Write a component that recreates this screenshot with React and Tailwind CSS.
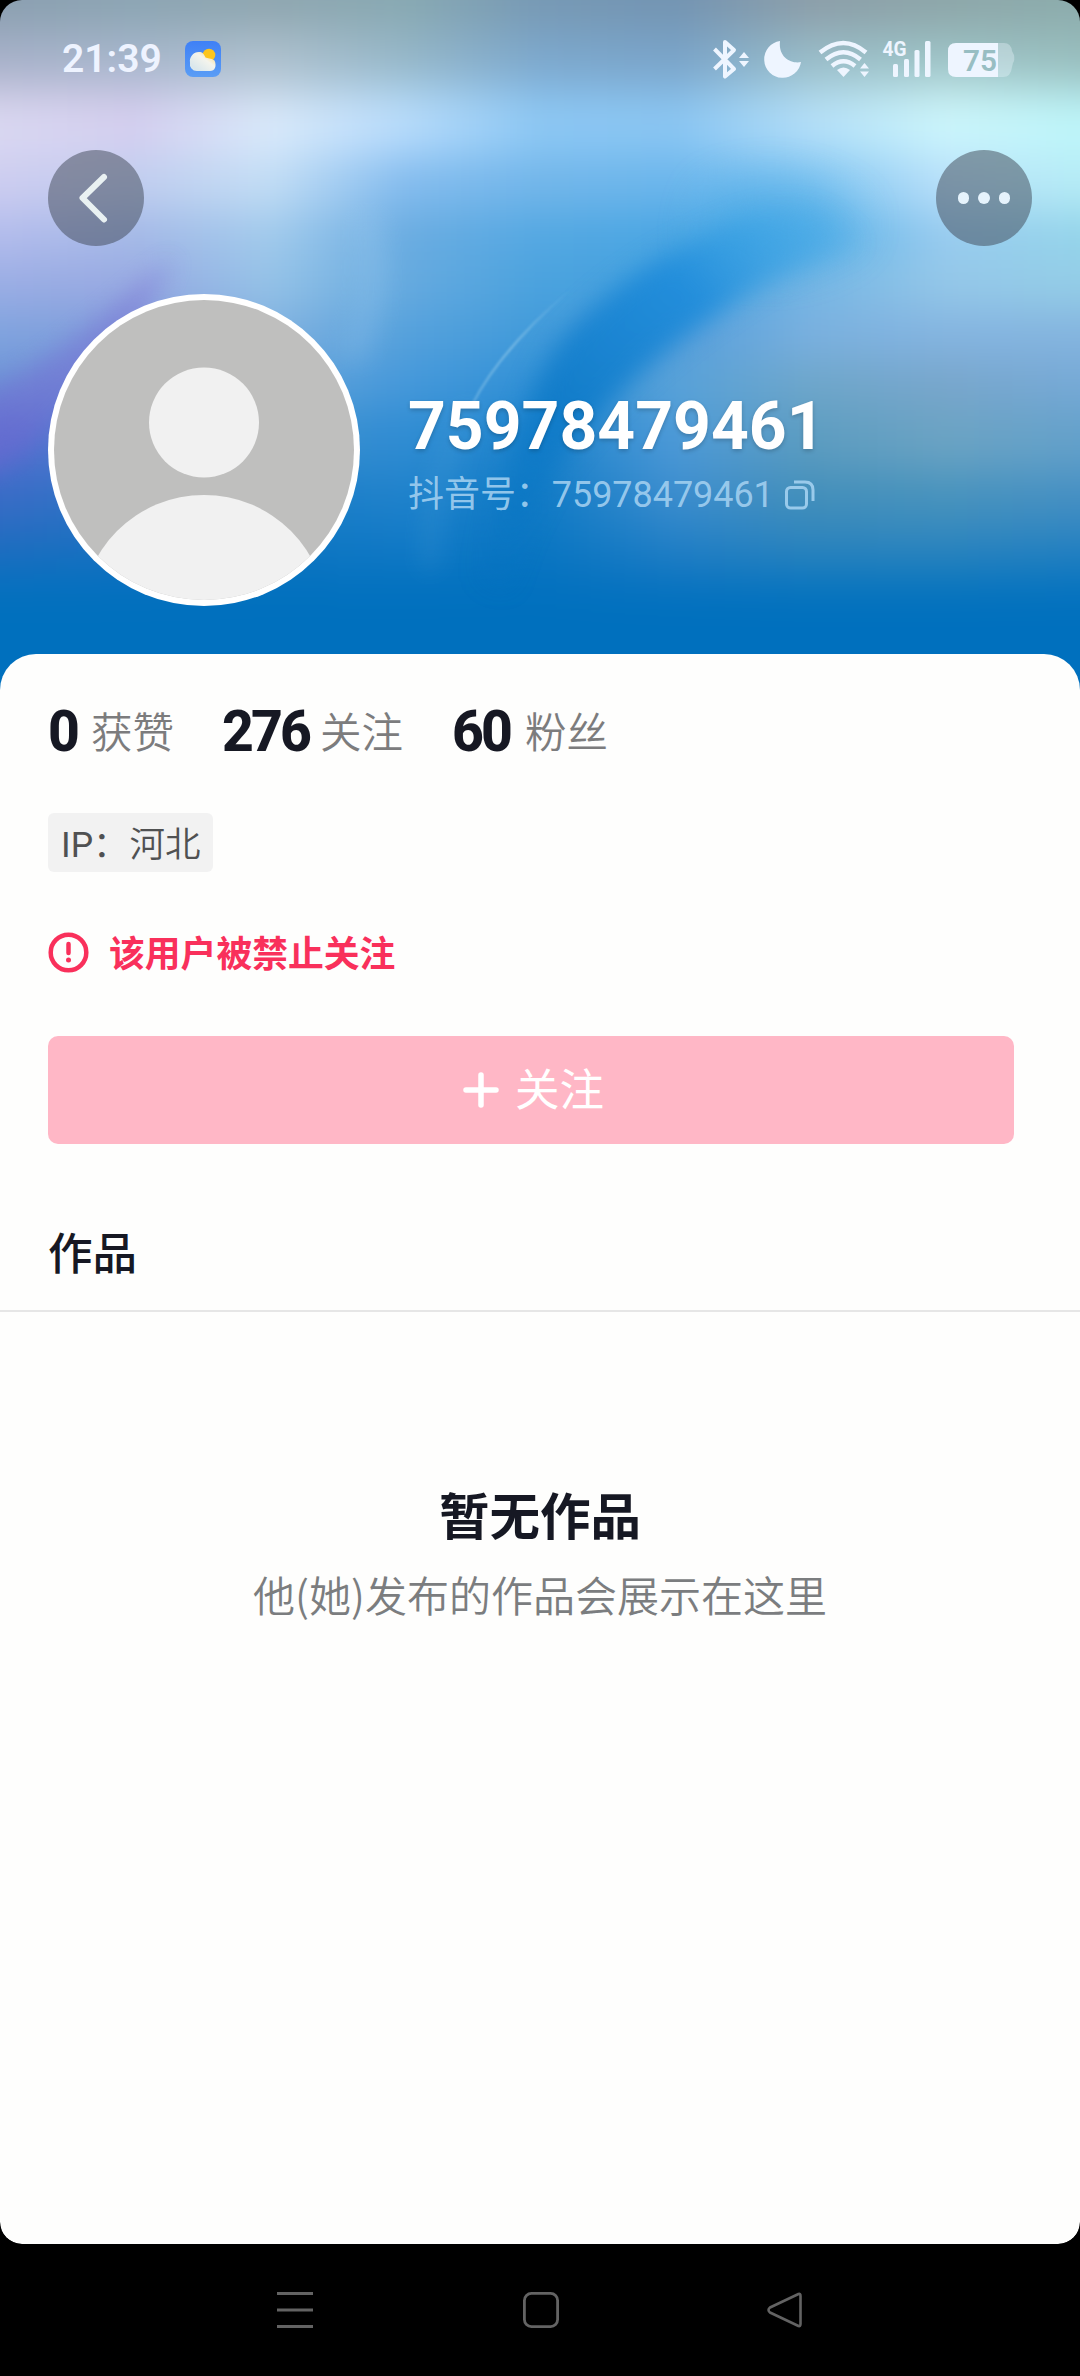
import React from "react";

const backdropRows = [
  { y: -60, h: 90, colors: ["#8b9fb0", "#8ca5b3", "#8fa6b0", "#88a9b2", "#7799b4", "#7394b2", "#8c9ea9", "#8da6a9", "#8cacac"] },
  { y: 30, h: 50, colors: ["#a5b0c8", "#a5b6cb", "#adc0cd", "#95b6c7", "#7ca7cb", "#79a3c8", "#98bbc7", "#9cc2c5", "#98bdbd"] },
  { y: 80, h: 20, colors: ["#c6c4de", "#c3c1de", "#c3d3e3", "#a9cfe8", "#86bae4", "#84b7e0", "#acd4e2", "#bfe4e6", "#abdcde"] },
  { y: 100, h: 55, colors: ["#dad8f1", "#d5cff0", "#daeafb", "#b8dcfc", "#8dc8f4", "#8ac6f3", "#b4dff9", "#ccf6fc", "#bef6fa"] },
  { y: 155, h: 55, colors: ["#cdcdf0", "#c1ceef", "#c2ddf5", "#84bcee", "#72b6ea", "#6bb6ec", "#80c4f0", "#b9e0fa", "#b6ecf6"] },
  { y: 210, h: 50, colors: ["#b3bcec", "#a4b9e7", "#a1caec", "#6aace1", "#54a8e2", "#4aa6e3", "#5ab2e8", "#98cbef", "#94d4ea"] },
  { y: 260, h: 50, colors: ["#9aade4", "#98a9e2", "#94c2e7", "#66aadf", "#4aa2de", "#42a0de", "#76b6e4", "#94c7e8", "#94cde7"] },
  { y: 310, h: 50, colors: ["#7fa3de", "#7f9cda", "#80b0df", "#55a1dc", "#409ada", "#559edb", "#7ab0df", "#84b4e0", "#84b4df"] },
  { y: 360, h: 50, colors: ["#6d92d6", "#6b90d6", "#64a3da", "#4598da", "#3090d6", "#58a2d9", "#6ea6ca", "#78a6cb", "#76a9d6"] },
  { y: 410, h: 60, colors: ["#556ecf", "#4b7fcf", "#3b8ed0", "#2f8cd2", "#1d83cc", "#4c99d7", "#5c9cc0", "#6ba3c3", "#64a1ca"] },
  { y: 470, h: 50, colors: ["#3a6cc6", "#2c76c6", "#1d7dc7", "#1f82cb", "#117bc6", "#3c8dce", "#438fba", "#4893bd", "#4690c3"] },
  { y: 520, h: 40, colors: ["#226cc0", "#1a72c1", "#1077c3", "#127ac7", "#0b77c3", "#2581c7", "#2f85bd", "#3086be", "#2a83c1"] },
  { y: 560, h: 30, colors: ["#0c70bf", "#0a70bf", "#0672bf", "#0773c0", "#0572c0", "#1176c1", "#147abf", "#147abe", "#1078c0"] },
  { y: 590, h: 210, colors: ["#0070be", "#0070be", "#0070be", "#0070be", "#0070be", "#0070be", "#0070be", "#0070be", "#0070be"] },
];

function Backdrop() {
  return (
    <svg className="absolute inset-0 h-[720px] w-[1080px]" viewBox="0 0 1080 720" preserveAspectRatio="none">
      <defs>
        <filter id="smooth" filterUnits="userSpaceOnUse" x="-100" y="-100" width="1280" height="920" colorInterpolationFilters="sRGB">
          <feGaussianBlur stdDeviation="14 20" />
        </filter>
        <filter id="soft" filterUnits="userSpaceOnUse" x="-100" y="-100" width="1280" height="920" colorInterpolationFilters="sRGB">
          <feGaussianBlur stdDeviation="22" />
        </filter>
        <filter id="edge" filterUnits="userSpaceOnUse" x="-100" y="-100" width="1280" height="920" colorInterpolationFilters="sRGB">
          <feGaussianBlur stdDeviation="12" />
        </filter>
        <filter id="thin" filterUnits="userSpaceOnUse" x="0" y="0" width="1080" height="720">
          <feGaussianBlur stdDeviation="1.2" />
        </filter>
        <linearGradient id="band" x1="840" y1="200" x2="490" y2="590" gradientUnits="userSpaceOnUse">
          <stop offset="0" stopColor="#44aae8" stopOpacity="0" />
          <stop offset="0.16" stopColor="#2f9ce2" stopOpacity="0.5" />
          <stop offset="0.32" stopColor="#1f8cdb" stopOpacity="0.9" />
          <stop offset="0.65" stopColor="#0e7ac8" stopOpacity="0.9" />
          <stop offset="1" stopColor="#0070be" stopOpacity="0.1" />
        </linearGradient>
        <linearGradient id="arc" x1="570" y1="290" x2="465" y2="415" gradientUnits="userSpaceOnUse">
          <stop offset="0" stopColor="#8fc8ea" stopOpacity="0" />
          <stop offset="0.5" stopColor="#8fc8ea" stopOpacity="0.6" />
          <stop offset="1" stopColor="#8fc8ea" stopOpacity="0.4" />
        </linearGradient>
        {backdropRows.map((row, i) => (
          <linearGradient key={i} id={`row${i}`} x1="0" y1="0" x2="1080" y2="0" gradientUnits="userSpaceOnUse">
            {row.colors.map((color, j) => (
              <stop key={j} offset={j / 8} stopColor={color} />
            ))}
          </linearGradient>
        ))}
      </defs>
      <g filter="url(#smooth)">
        {backdropRows.map((row, i) => (
          <rect key={i} x="-80" y={row.y} width="1240" height={row.h + 1} fill={`url(#row${i})`} />
        ))}
      </g>
      <path d="M710 195 Q790 165 850 210 Q880 235 800 262 Q740 270 700 250Z" fill="#45a8e6" opacity="0.5" filter="url(#soft)" />
      <path d="M860 245 Q820 190 740 220 Q620 270 560 340 Q510 420 480 580 L508 590 Q530 490 590 425 Q650 355 740 298 Q800 262 860 245Z" fill="url(#band)" filter="url(#edge)" />
      <path d="M-20 395 Q60 360 175 255 Q115 370 60 420 Q20 460 -20 480Z" fill="#7668d2" opacity="0.45" filter="url(#edge)" />
      <path d="M366 215 Q385 290 350 360" stroke="#a9d2f4" strokeWidth="26" opacity="0.18" fill="none" filter="url(#edge)" />
      <path d="M472 405 Q500 350 570 290" stroke="url(#arc)" strokeWidth="2.500" fill="none" filter="url(#thin)" />
      <path d="M430 570 Q430 470 472 405" stroke="#6db4e4" strokeWidth="16" opacity="0.18" fill="none" filter="url(#edge)" />
    </svg>
  );
}

function WeatherIcon() {
  return (
    <svg className="ml-[24px] h-9 w-9" viewBox="0 0 36 36">
      <defs>
        <linearGradient id="sky" x1="0" y1="0" x2="0" y2="1">
          <stop offset="0" stopColor="#3f80f6" />
          <stop offset="1" stopColor="#5a9df5" />
        </linearGradient>
        <linearGradient id="cloud" x1="0" y1="1" x2="1" y2="0">
          <stop offset="0.2" stopColor="#dbe8ec" />
          <stop offset="0.6" stopColor="#f4f4ec" />
          <stop offset="1" stopColor="#ffd76a" />
        </linearGradient>
      </defs>
      <rect width="36" height="36" rx="8" fill="url(#sky)" />
      <circle cx="24" cy="14" r="6.3" fill="#fcc51c" />
      <path d="M12 30a7 7 0 0 1-7-8.500A9 9 0 0 1 14 11c3.500 0 5 2 6.500 5.500 2 1 5.500.500 9 3C32 25 30 30 25 30Z" fill="url(#cloud)" />
    </svg>
  );
}

function StatusIcons() {
  return (
    <svg className="h-[52px] w-[304px]" viewBox="712 30 304 52" fill="#eef5ff">
      <path d="M714.500 49 L734 69 L725 76.500 V42 L734 50 L714.500 69" fill="none" stroke="#eef5ff" strokeWidth="4" strokeLinejoin="round" />
      <path d="M739 58 l5-6 5 6Z M739 61 l5 6 5-6Z" />
      <path d="M780 41 A18.500 18.500 0 1 0 801 62 C793 64 778 59 780 41Z" />
      <g fill="none" stroke="#eef5ff" strokeWidth="4.400">
        <path d="M820 52.500 Q843.500 33.500 866 52.500" />
        <path d="M826 59.500 Q843.500 45 860.500 59.500" />
        <path d="M832 66 Q843.500 56.500 855 66" />
      </g>
      <path d="M837 70 Q843.500 65 850 70 L843.500 77Z" />
      <path d="M860 68.500 l4.500-5.500 4.500 5.500Z M860 71.500 l4.500 5.500 4.500-5.500Z" />
      <text x="882.500" y="55.500" fontFamily="Roboto" fontSize="20.500" fontWeight="700" textLength="24" lengthAdjust="spacingAndGlyphs">4G</text>
      <rect x="893" y="64" width="5" height="13" rx="1.500" />
      <rect x="904" y="59" width="5" height="18" rx="1.500" />
      <rect x="914.500" y="50" width="5" height="27" rx="1.500" />
      <rect x="925" y="41" width="5.500" height="36" rx="1.500" />
      <path d="M998 43h6q7 0 8 8l2 4q1 5-1 8l-1 4q-1 10-9 10h-5Z" opacity="0.350" />
      <path d="M956 43h42v34h-42q-8 0-8-8V51q0-8 8-8Z" />
      <text x="963" y="71" fontFamily="Roboto" fontSize="29.500" fontWeight="600" fill="#98bec3" textLength="34" lengthAdjust="spacingAndGlyphs">75</text>
    </svg>
  );
}

function StatusBar() {
  return (
    <div className="flex h-[116px] items-start justify-between pt-[30px] pr-16 pl-[62px]">
      <div className="flex items-center pt-[10px]">
        <span className="w-[99px] text-[39px] leading-[38px] font-semibold text-[#eef3ff]">21:39</span>
        <WeatherIcon />
      </div>
      <StatusIcons />
    </div>
  );
}

function TopButtons() {
  return (
    <div className="mt-[34px] flex justify-between px-12">
      <button className="flex h-24 w-24 items-center justify-center rounded-full bg-[#3d4654]/50">
        <svg className="h-24 w-24" viewBox="0 0 96 96" fill="none" stroke="#e9f1f2" strokeWidth="6" strokeLinecap="round" strokeLinejoin="round">
          <path d="M56 27 L34.500 48 L56 69.500" />
        </svg>
      </button>
      <button className="flex h-24 w-24 items-center justify-center gap-[9px] rounded-full bg-[#3d4654]/50">
        <span className="h-[11.500px] w-[11.500px] rounded-full bg-[#e6f3fc]" />
        <span className="h-[11.500px] w-[11.500px] rounded-full bg-[#e6f3fc]" />
        <span className="h-[11.500px] w-[11.500px] rounded-full bg-[#e6f3fc]" />
      </button>
    </div>
  );
}

function Avatar() {
  return (
    <svg className="h-[312px] w-[312px]" viewBox="0 0 312 312">
      <clipPath id="face">
        <circle cx="156" cy="156" r="150" />
      </clipPath>
      <circle cx="156" cy="156" r="156" fill="#fff" />
      <g clipPath="url(#face)">
        <rect width="312" height="312" fill="#bfbfbe" />
        <circle cx="156" cy="128.500" r="55" fill="#f1f1f1" />
        <circle cx="156" cy="324" r="123" fill="#f1f1f1" />
      </g>
    </svg>
  );
}

function Profile() {
  return (
    <div className="mt-12 flex px-12">
      <Avatar />
      <div className="ml-12 pt-[94px]">
        <h1 className="text-[66px] leading-[78px] font-bold text-white [text-shadow:0_2px_4px_rgba(0,0,0,0.200)]">75978479461</h1>
        <div className="mt-[11px] flex h-9 items-center text-[36px] leading-9 text-[#a3d0f0]/90">
          <span className="tracking-[-0.050px] whitespace-nowrap">抖音号：75978479461</span>
          <svg className="ml-[11px] h-[30px] w-[30px]" viewBox="0 0 30 30" fill="none" stroke="currentColor" strokeWidth="3">
            <rect x="1.500" y="7.500" width="20" height="20.500" rx="4" />
            <path d="M9 2 H20 Q28 2 28 10 V21" />
          </svg>
        </div>
      </div>
    </div>
  );
}

const stats = [
  { value: "0", label: "获赞", width: "w-[174px]", box: "w-[43px]" },
  { value: "276", label: "关注", width: "w-[230px]", box: "w-[98px]" },
  { value: "60", label: "粉丝", width: "w-[180px]", box: "w-[73px]" },
];

function Sheet() {
  return (
    <div className="relative mt-12 h-[1590px] rounded-t-[36px] rounded-b-[22px] bg-[#fefefd] pt-[50px]">
      <div className="flex h-14 pl-12">
        {stats.map((s) => (
          <div key={s.label} className={`flex items-center ${s.width}`}>
            <div className={s.box}>
              <span className="inline-block origin-left scale-x-[0.970] text-[57px] leading-14 font-extrabold tracking-[-3px] text-[#161823]">{s.value}</span>
            </div>
            <span className="pt-1 text-[41.500px] leading-14 font-[350] text-[#7c7c7d]">{s.label}</span>
          </div>
        ))}
      </div>

      <div className="mt-[53px] ml-12 flex h-[59px] w-[165px] items-center rounded-md bg-[#f2f2f2] pt-[7px] pl-[13px] text-[35.500px] whitespace-nowrap text-[#505152]">
        IP：<span className="pl-px font-[350]">河北</span>
      </div>

      <div className="mt-[60px] ml-12 flex h-10 items-center text-[#f9305b]">
        <svg className="h-[41px] w-[41px]" viewBox="0 0 41 41" fill="none" stroke="currentColor" strokeWidth="4.500">
          <circle cx="20.500" cy="20.500" r="17.800" />
          <path d="M20.500 12 V21" strokeLinecap="round" />
          <circle cx="20.500" cy="28" r="2.500" fill="currentColor" stroke="none" />
        </svg>
        <span className="ml-5 pt-[7px] text-[35.800px] font-bold">该用户被禁止关注</span>
      </div>

      <button className="mt-16 ml-12 flex h-[108px] w-[966px] items-center justify-center rounded-[10px] bg-[#ffb7c6] pl-[5px] text-white">
        <svg className="h-9 w-9" viewBox="0 0 36 36" fill="none" stroke="currentColor" strokeWidth="5.500" strokeLinecap="round">
          <path d="M18 3 V33 M3 18 H33" />
        </svg>
        <span className="ml-4 pt-[3px] text-[44.500px]">关注</span>
      </button>

      <div className="mt-[74px] flex h-[94px] items-center border-b-2 border-[#e6e6e6] pl-12">
        <h2 className="pb-[18px] text-[44.500px] leading-[70px] font-medium text-[#161823]">作品</h2>
      </div>

      <div className="mt-[170px] flex flex-col items-center">
        <p className="text-[50.500px] leading-[72px] font-bold text-[#161823]">暂无作品</p>
        <p className="mt-1 font-['Noto_Sans_CJK_SC',sans-serif] text-[42px] leading-[72px] font-[350] text-[#7b7d7f]">他(她)发布的作品会展示在这里</p>
      </div>
    </div>
  );
}

function NavBar() {
  return (
    <div className="flex h-[132px] items-center pl-[277px]">
      <svg className="h-9 w-9" viewBox="0 0 36 36" stroke="#636363" strokeWidth="3">
        <path d="M0 1.500H36 M0 18H36 M0 34.500H36" />
      </svg>
      <svg className="ml-[210px] h-9 w-9" viewBox="0 0 36 36" fill="none" stroke="#636363" strokeWidth="2.800">
        <rect x="1.400" y="1.400" width="33.200" height="33.200" rx="7" />
      </svg>
      <svg className="ml-[208px] h-9 w-9" viewBox="0 0 36 36" fill="none" stroke="#636363" strokeWidth="2.600" strokeLinejoin="round">
        <path d="M31.500 2 L3 15.500 Q0 18 3 20.500 L31.500 34 Q33.500 34.500 33.500 32 V4 Q33.500 1.500 31.500 2Z" />
      </svg>
    </div>
  );
}

function App() {
  return (
    <div className="h-[2376px] w-[1080px] overflow-hidden bg-black font-[Roboto,'Noto_Sans_CJK_SC',sans-serif]">
      <div className="relative h-[2244px] overflow-hidden rounded-[22px]">
        <Backdrop />
        <div className="relative">
          <StatusBar />
          <TopButtons />
          <Profile />
          <Sheet />
        </div>
      </div>
      <NavBar />
    </div>
  );
}

export default App;
